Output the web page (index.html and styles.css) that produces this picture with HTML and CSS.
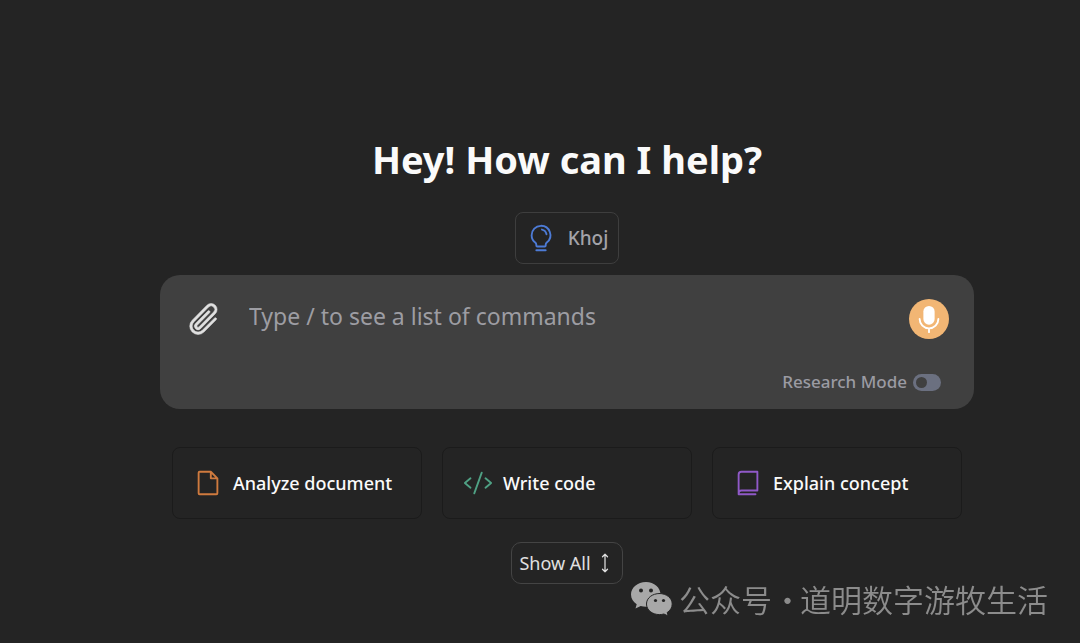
FILE: index.html
```html
<!DOCTYPE html>
<html lang="en">
  <head>
    <meta charset="UTF-8" />
    <meta name="viewport" content="width=device-width, initial-scale=1.0" />
    <title>Khoj</title>
    <link rel="stylesheet" href="styles.css">
  </head>
  <body>
    <main class="home">
      <h1 class="greeting">Hey! How can I help?</h1>

      <button type="button" class="agent">
        <svg class="agent-icon" viewBox="0 0 256 256" aria-hidden="true">
          <path d="M88 232h80M78.700 167A79.900 79.900 0 0 1 48 104.500C47.800 61 82.700 25 126.100 24A80 80 0 0 1 177.400 167 24.100 24.100 0 0 0 168 186v6a8 8 0 0 1-8 8H96a8 8 0 0 1-8-8v-6a24.100 24.100 0 0 0-9.300-19ZM136 56a50 50 0 0 1 39 40" />
        </svg>
        Khoj
      </button>

      <form class="chat">
        <div class="chat-row">
          <button type="button" class="attach" aria-label="Attach a file">
            <svg viewBox="0 0 256 256" aria-hidden="true">
              <path d="M209.660,122.340a8,8,0,0,1,0,11.320l-82.050,82a56,56,0,0,1-79.200-79.210L147.670,35.730a40,40,0,1,1,56.610,56.550L105,193A24,24,0,1,1,71,159L154.300,74.380A8,8,0,1,1,165.700,85.600L82.390,170.310a8,8,0,1,0,11.270,11.360L192.930,81A24,24,0,1,0,159,47L59.760,147.680a40,40,0,1,0,56.530,56.620l82.060-82A8,8,0,0,1,209.660,122.340Z" />
            </svg>
          </button>
          <input class="message" type="text" aria-label="Message" placeholder="Type / to see a list of commands" />
          <button type="button" class="mic" aria-label="Record voice">
            <svg viewBox="0 0 256 256" aria-hidden="true">
              <rect x="80" y="16" width="96" height="160" rx="48" />
              <path d="M208 128a80 80 0 0 1-160 0M128 208v32" />
            </svg>
          </button>
        </div>
        <div class="mode">
          <label for="research">Research Mode</label>
          <input class="toggle" type="checkbox" role="switch" id="research" />
        </div>
      </form>

      <div class="suggestions">
        <button type="button" class="card">
          <svg class="card-icon orange" viewBox="0 0 256 256" aria-hidden="true">
            <path d="M200 224H56a8 8 0 0 1-8-8V40a8 8 0 0 1 8-8h96l56 56v128a8 8 0 0 1-8 8ZM152 32v56h56" />
          </svg>
          Analyze document
        </button>
        <button type="button" class="card">
          <svg class="card-icon green" viewBox="0 0 256 256" aria-hidden="true">
            <path d="M64 88 16 128l48 40M192 88l48 40-48 40M160 40 96 216" />
          </svg>
          Write code
        </button>
        <button type="button" class="card">
          <svg class="card-icon purple" viewBox="0 0 256 256" aria-hidden="true">
            <path d="M48 216a24 24 0 0 1 24-24h136V32H72a24 24 0 0 0-24 24ZM48 216v8h144" />
          </svg>
          Explain concept
        </button>
      </div>

      <button type="button" class="show-all">
        Show All
        <svg viewBox="0 0 256 256" aria-hidden="true">
          <path d="M128 16v224M96 48l32-32 32 32M96 208l32 32 32-32" />
        </svg>
      </button>
    </main>

    <div class="account" lang="zh-CN">
      <svg viewBox="0 0 42 34" aria-hidden="true">
        <path class="bubble" d="M15 0C6.500 0 0 5.600 0 12.500c0 4 2.200 7.500 5.700 9.800L4.500 26.500l5.200-2.500c1.700.500 3.500.800 5.300.800 8.300 0 14.500-5.500 14.500-12.300S23.300 0 15 0Z" />
        <path class="bubble front" d="M28.500 11.500C21.200 11.500 15.500 16 15.500 22s5.700 10.600 13 10.600c1.500 0 3-.200 4.400-.600l4.300 2-1-3.500c3-1.900 5-4.900 5-8.500 0-6-5.700-10.500-12.700-10.500Z" />
        <g class="eyes">
          <circle cx="10" cy="8.500" r="2" />
          <circle cx="20" cy="8.500" r="2" />
          <circle cx="24.500" cy="18.500" r="1.600" />
          <circle cx="32.500" cy="18.500" r="1.600" />
        </g>
      </svg>
      <span>公众号</span>
      <span class="dot">·</span>
      <span>道明数字游牧生活</span>
    </div>
  </body>
</html>
```
FILE: styles.css
```css
* {
  box-sizing: border-box;
}
body {
  margin: 0;
  background: #242424;
  color: #fafafa;
  font-family: 'Noto Sans', 'Noto Sans CJK SC', sans-serif;
}
button {
  background: none;
  color: inherit;
  font: inherit;
  padding: 0;
  cursor: pointer;
}
svg {
  display: block;
  flex: none;
  fill: none;
  stroke: currentColor;
  stroke-width: 16;
  stroke-linecap: round;
  stroke-linejoin: round;
}
.home {
  display: flex;
  flex-direction: column;
  align-items: center;
  padding: 136px 106px 0 160px;
}
.greeting {
  margin: 0 0 30px;
  font-size: 38px;
  line-height: 46px;
  font-weight: 700;
}
.agent {
  display: flex;
  align-items: center;
  gap: 12px;
  height: 52px;
  margin-bottom: 11px;
  padding: 0 10px;
  border: 1px solid #3e3e3e;
  border-radius: 8px;
  color: #a3a3a9;
  font-size: 19px;
  font-weight: 500;
}
.agent-icon {
  width: 30px;
  height: 30px;
  color: #4d7bd6;
}
.chat {
  width: 100%;
  max-width: 1000px;
  height: 134px;
  padding: 22px 25px 0;
  border-radius: 20px;
  background: #404040;
}
.chat-row {
  display: flex;
  align-items: center;
}
.attach {
  border: 0;
}
.attach svg {
  width: 38px;
  height: 38px;
  fill: #e0e0e0;
  stroke: #e0e0e0;
  stroke-width: 4;
}
.message {
  flex: 1;
  min-width: 0;
  height: 44px;
  padding: 0 26px 6px;
  border: 0;
  outline: 0;
  background: none;
  color: #fafafa;
  font: inherit;
  font-size: 23px;
}
.message::placeholder {
  color: #9d9da3;
  opacity: 1;
}
.mic {
  display: grid;
  place-items: center;
  width: 40px;
  height: 40px;
  border: 0;
  border-radius: 50%;
  background: #f2b674;
  color: #fff;
}
.mic svg {
  width: 30px;
  height: 30px;
}
.mic rect {
  fill: #fff;
  stroke: none;
}
.mode {
  display: flex;
  justify-content: flex-end;
  align-items: center;
  gap: 6px;
  padding: 28px 8px 0 0;
  color: #9b9ba3;
  font-size: 17px;
  line-height: 26px;
  font-weight: 500;
}
.toggle {
  appearance: none;
  width: 28px;
  height: 17px;
  margin: 0;
  padding: 3px;
  border-radius: 9px;
  background: #6b7080;
}
.toggle::before {
  content: '';
  display: block;
  width: 11px;
  height: 11px;
  border-radius: 50%;
  background: #404040;
}
.toggle:checked::before {
  margin-left: auto;
}
.suggestions {
  display: grid;
  grid-template-columns: repeat(3, 1fr);
  gap: 20px;
  width: 100%;
  max-width: 976px;
  margin: 38px 0 23px;
  padding: 0 12px;
}
.card {
  display: flex;
  align-items: center;
  gap: 10px;
  height: 72px;
  padding: 0 20px;
  border: 1px solid #1b1b1b;
  border-radius: 8px;
  font-size: 18px;
  font-weight: 500;
}
.card-icon {
  width: 30px;
  height: 30px;
}
.orange {
  color: #cf7a3e;
}
.green {
  color: #4fa184;
}
.purple {
  color: #9059c8;
}
.show-all {
  display: flex;
  align-items: center;
  gap: 4px;
  height: 42px;
  padding: 0 7px;
  border: 1px solid #444;
  border-radius: 10px;
  color: #e0e0e0;
  font-size: 18px;
}
.show-all svg {
  width: 20px;
  height: 20px;
}
.account {
  position: fixed;
  right: 32px;
  bottom: 21px;
  display: flex;
  align-items: center;
  color: #8c8c8c;
  font-family: 'Noto Sans CJK SC', sans-serif;
  font-size: 31px;
  line-height: 46px;
  font-weight: 350;
}
.account svg {
  width: 42px;
  height: 34px;
  margin-right: 6px;
}
.bubble {
  fill: #a8a8a8;
  stroke: none;
}
.front {
  stroke: #242424;
  stroke-width: 1;
}
.eyes {
  fill: #242424;
  stroke: none;
}
.dot {
  width: 28px;
  text-align: center;
}
```
